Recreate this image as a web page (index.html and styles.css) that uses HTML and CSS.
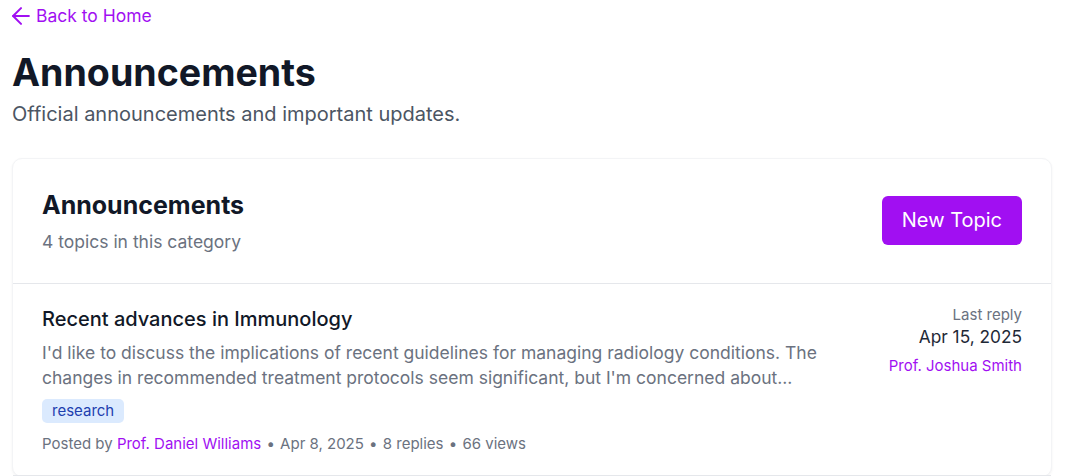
FILE: index.html
```html
<!DOCTYPE html>
<html lang="en">
<head>
    <meta charset="UTF-8">
    <meta name="viewport" content="width=device-width, initial-scale=1.0">
    <title>Announcements</title>
    <link rel="stylesheet" href="styles.css">
</head>
<body>
    <div class="page">
        <a href="#" class="back-link">
            <svg width="18" height="18" viewBox="4 4 16 16" fill="none" stroke="currentColor" stroke-width="1.8" stroke-linecap="round" stroke-linejoin="round"><path d="M19 12H5"/><path d="M12 19l-7-7 7-7"/></svg>
            Back to Home
        </a>
        <h1 class="page-title">Announcements</h1>
        <p class="page-subtitle">Official announcements and important updates.</p>

        <div class="card">
            <div class="card-header">
                <div>
                    <h2 class="card-title">Announcements</h2>
                    <p class="card-count">4 topics in this category</p>
                </div>
                <button class="new-topic">New Topic</button>
            </div>

            <div class="topic">
                <div class="topic-main">
                    <h3 class="topic-title">Recent advances in Immunology</h3>
                    <p class="topic-excerpt">I'd like to discuss the implications of recent guidelines for managing radiology conditions. The changes in recommended treatment protocols seem significant, but I'm concerned about...</p>
                    <span class="tag">research</span>
                    <div class="topic-meta">
                        Posted by <a href="#" class="user">Prof. Daniel Williams</a>
                        <span class="dot">&bull;</span> Apr 8, 2025
                        <span class="dot">&bull;</span> 8 replies
                        <span class="dot">&bull;</span> 66 views
                    </div>
                </div>
                <div class="topic-last">
                    <div class="last-label">Last reply</div>
                    <div class="last-date">Apr 15, 2025</div>
                    <a href="#" class="user">Prof. Joshua Smith</a>
                </div>
            </div>
        </div>
    </div>
</body>
</html>
```

FILE: styles.css
```css
*{
    box-sizing: border-box;
}
body{
    margin: 0;
    font-family: Inter, "Noto Sans", sans-serif;
    color: #111827;
    background: #ffffff;
}
.page{
    padding: 4px 14px 0 12px;
}
.back-link{
    display: inline-flex;
    align-items: center;
    gap: 6px;
    color: #a10ff2;
    text-decoration: none;
    font-size: 17.5px;
    line-height: 24px;
}
.page-title{
    font-size: 37.6px;
    font-weight: 700;
    line-height: 40px;
    margin: 24px 0 0 0;
}
.page-subtitle{
    font-size: 20px;
    line-height: 28px;
    color: #4b5563;
    margin: 7px 0 0 0;
}
.card{
    margin-top: 30px;
    border: 1px solid #f3f4f6;
    border-radius: 10px;
    box-shadow: 0 1px 3px rgba(0, 0, 0, 0.05);
    background: #ffffff;
}
.card-header{
    display: flex;
    justify-content: space-between;
    align-items: center;
    padding: 30px 29px 28px 29px;
    border-bottom: 1px solid #e5e7eb;
}
.card-title{
    font-size: 25px;
    font-weight: 700;
    line-height: 32px;
    margin: 0;
}
.card-count{
    font-size: 17.5px;
    line-height: 26px;
    color: #6b7280;
    margin: 8px 0 0 0;
}
.new-topic{
    background: #a10ff2;
    color: #ffffff;
    border: none;
    border-radius: 6px;
    font-family: inherit;
    font-size: 20px;
    line-height: 28px;
    padding: 10px 20px 11px 20px;
    margin-top: -3px;
}
.topic{
    display: flex;
    justify-content: space-between;
    gap: 64px;
    padding: 21px 29px 21px 29px;
    border-bottom: 1px solid #e5e7eb;
}
.topic-main{
    flex: 1;
}
.topic-title{
    font-size: 20px;
    font-weight: 500;
    line-height: 28px;
    margin: 0;
}
.topic-excerpt{
    font-size: 17.5px;
    line-height: 25px;
    color: #6b7280;
    margin: 7px 0 9px 0;
}
.tag{
    display: inline-block;
    background: #dbeafe;
    color: #1e40af;
    font-size: 15px;
    line-height: 20px;
    padding: 2px 10px;
    border-radius: 5px;
}
.topic-meta{
    margin-top: 11px;
    font-size: 15px;
    line-height: 20px;
    color: #6b7280;
}
.dot{
    margin: 0 1px;
}
.user{
    color: #a10ff2;
    text-decoration: none;
}
.topic-last{
    display: flex;
    flex-direction: column;
    align-items: flex-end;
    text-align: right;
    font-size: 15px;
}
.last-label{
    color: #6b7280;
    line-height: 20px;
}
.last-date{
    font-size: 17.3px;
    color: #1f2937;
    line-height: 24px;
    margin: 0 0 7px 0;
}
```
